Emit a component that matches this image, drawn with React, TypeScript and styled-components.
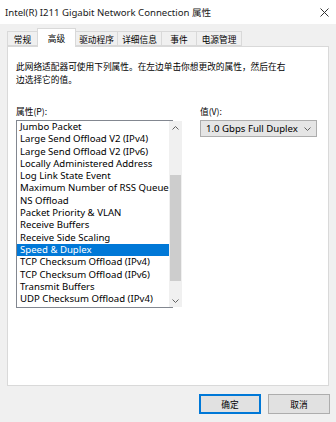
import React from 'react';
import styled, { createGlobalStyle } from 'styled-components';

const GlobalStyle = createGlobalStyle`
  html, body { margin: 0; padding: 0; background: #f0f0f0; }
  body { font-family: "Noto Sans", "Noto Sans CJK SC", sans-serif; }
`;

const Window = styled.div`
  width: 336px;
  height: 422px;
  display: flex;
  flex-direction: column;
  background: #f0f0f0;
  box-sizing: border-box;
  color: #000;
`;

const TitleBar = styled.div`
  height: 24px;
  display: flex;
  align-items: center;
  justify-content: space-between;
  padding: 0 7px 0 5px;
  background: #fff;
  font-size: 9.6px;
  color: #1a1a1a;
`;

const TabStrip = styled.div`
  height: 22px;
  display: flex;
  align-items: flex-end;
  padding-left: 8px;
  position: relative;
  z-index: 1;
`;

const Tab = styled.div<{ $active?: boolean; $w: number }>`
  width: ${p => p.$w}px;
  height: ${p => (p.$active ? 19 : 15)}px;
  margin-bottom: ${p => (p.$active ? -1 : 0)}px;
  display: flex;
  align-items: center;
  justify-content: center;
  box-sizing: border-box;
  background: ${p => (p.$active ? '#fff' : '#f0f0f0')};
  border: 1px solid #d9d9d9;
  border-bottom: ${p => (p.$active ? 'none' : '1px solid #d9d9d9')};
  margin-left: -1px;
  padding-top: ${p => (p.$active ? 0 : 1)}px;
  font-size: 8.7px;
  font-family: "Noto Sans CJK SC", sans-serif;
`;

const Panel = styled.div`
  margin: 0 7px;
  height: 340px;
  background: #fff;
  border: 1px solid #d9d9d9;
  box-sizing: border-box;
  padding: 13px 8px 0;
`;

const Desc = styled.div`
  font-family: "Noto Sans CJK SC", sans-serif;
  font-size: 8.7px;
  line-height: 13px;
  width: 274px;
`;

const Columns = styled.div`
  display: flex;
  margin-top: 20px;
  gap: 27px;
`;

const Column = styled.div`
  display: flex;
  flex-direction: column;
`;

const Label = styled.div`
  font-family: "Noto Sans CJK SC", sans-serif;
  font-size: 8.7px;
  line-height: 12px;
  height: 12px;
  margin-bottom: 2px;
`;

const ListBox = styled.div`
  width: 157px;
  height: 188px;
  border: 1px solid #828790;
  box-sizing: border-box;
  display: flex;
`;

const Items = styled.div`
  flex: 1;
`;

const Item = styled.div<{ $selected?: boolean }>`
  height: 12.3px;
  line-height: 12.3px;
  font-size: 9.6px;
  padding-left: 3px;
  white-space: nowrap;
  overflow: hidden;
  background: ${p => (p.$selected ? '#0078d7' : 'transparent')};
  color: ${p => (p.$selected ? '#fff' : '#000')};
`;

const ScrollBar = styled.div`
  width: 13px;
  background: #f0f0f0;
  display: flex;
  flex-direction: column;
  align-items: center;
`;

const ScrollArrow = styled.div`
  height: 13px;
  width: 13px;
  display: flex;
  align-items: center;
  justify-content: center;
`;

const Track = styled.div`
  flex: 1;
  width: 100%;
  display: flex;
  flex-direction: column;
  padding-top: 41px;
`;

const Thumb = styled.div`
  height: 106px;
  margin: 0 1px;
  background: #cdcdcd;
`;

const Select = styled.div`
  width: 117px;
  height: 17px;
  background: #e5e5e5;
  border: 1px solid #adadad;
  box-sizing: border-box;
  display: flex;
  align-items: center;
  justify-content: space-between;
  padding: 0 5px 0 5px;
  font-size: 9.6px;
`;

const Footer = styled.div`
  display: flex;
  justify-content: flex-end;
  gap: 7px;
  padding: 8px 6px 0 0;
`;

const Button = styled.div<{ $default?: boolean }>`
  width: 62px;
  height: 20px;
  box-sizing: border-box;
  background: #e1e1e1;
  border: 1px solid ${p => (p.$default ? '#0078d7' : '#adadad')};
  box-shadow: ${p => (p.$default ? 'inset 0 0 0 1px #0078d7' : 'none')};
  display: flex;
  align-items: center;
  justify-content: center;
  font-family: "Noto Sans CJK SC", sans-serif;
  font-size: 8.7px;
`;

const Chevron = ({ up }: { up?: boolean }) => (
  <svg width="7" height="4" viewBox="0 0 7 4">
    <path
      d={up ? 'M0.5 3.5 L3.5 0.5 L6.5 3.5' : 'M0.5 0.5 L3.5 3.5 L6.5 0.5'}
      fill="none"
      stroke="#606060"
      strokeWidth="1"
    />
  </svg>
);

const items = [
  'Jumbo Packet',
  'Large Send Offload V2 (IPv4)',
  'Large Send Offload V2 (IPv6)',
  'Locally Administered Address',
  'Log Link State Event',
  'Maximum Number of RSS Queue',
  'NS Offload',
  'Packet Priority & VLAN',
  'Receive Buffers',
  'Receive Side Scaling',
  'Speed & Duplex',
  'TCP Checksum Offload (IPv4)',
  'TCP Checksum Offload (IPv6)',
  'Transmit Buffers',
  'UDP Checksum Offload (IPv4)',
];

const tabs: [string, number][] = [
  ['常规', 31],
  ['高级', 39],
  ['驱动程序', 43],
  ['详细信息', 45],
  ['事件', 36],
  ['电源管理', 46],
];

export default function App() {
  return (
    <>
      <GlobalStyle />
      <Window>
        <TitleBar>
          <span>Intel(R) I211 Gigabit Network Connection 属性</span>
          <svg width="9" height="9" viewBox="0 0 9 9">
            <path d="M0.5 0.5 L8.5 8.5 M8.5 0.5 L0.5 8.5" stroke="#333" strokeWidth="1" />
          </svg>
        </TitleBar>
        <TabStrip>
          {tabs.map(([t, w]) => (
            <Tab key={t} $w={w} $active={t === '高级'}>{t}</Tab>
          ))}
        </TabStrip>
        <Panel>
          <Desc>此网络适配器可使用下列属性。在左边单击你想更改的属性，然后在右边选择它的值。</Desc>
          <Columns>
            <Column>
              <Label>属性(P):</Label>
              <ListBox>
                <Items>
                  {items.map(i => (
                    <Item key={i} $selected={i === 'Speed & Duplex'}>{i}</Item>
                  ))}
                </Items>
                <ScrollBar>
                  <ScrollArrow><Chevron up /></ScrollArrow>
                  <Track><Thumb /></Track>
                  <ScrollArrow><Chevron /></ScrollArrow>
                </ScrollBar>
              </ListBox>
            </Column>
            <Column>
              <Label>值(V):</Label>
              <Select>
                <span>1.0 Gbps Full Duplex</span>
                <Chevron />
              </Select>
            </Column>
          </Columns>
        </Panel>
        <Footer>
          <Button $default>确定</Button>
          <Button>取消</Button>
        </Footer>
      </Window>
    </>
  );
}
